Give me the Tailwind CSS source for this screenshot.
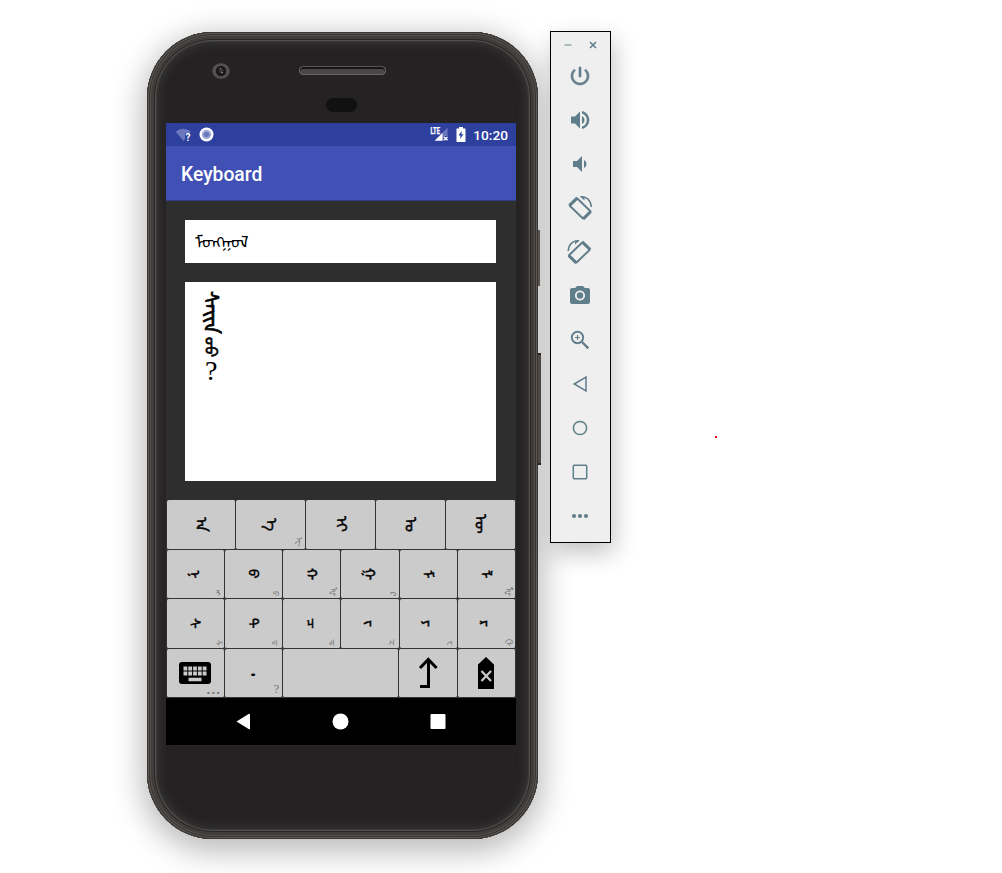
<!DOCTYPE html>
<html lang="mn">
<head>
<meta charset="utf-8">
<title>Keyboard</title>
<script src="https://cdn.jsdelivr.net/npm/@tailwindcss/browser@4"></script>
</head>
<body class="relative w-[1002px] h-[873px] overflow-hidden bg-white font-['Roboto','Noto_Sans',sans-serif]">
<div class="flex items-start pl-[147px] pt-[31px]">

  <!-- Phone -->
  <div class="relative mt-px w-[391px] h-[807px] rounded-[66px] bg-[#252223] pl-[19px] pr-[22px] shadow-[0_8px_30px_5px_rgba(0,0,0,0.27),inset_0_0_0_1px_#393633,inset_0_0_0_2px_#5f5b58,inset_0_0_0_3px_#353230,inset_0_0_0_4px_#55514e,inset_0_0_0_7px_#403d3a,inset_0_0_0_8px_#292726,inset_0_0_0_9px_#51504e,inset_0_0_0_10px_#3a3939,inset_0_0_10px_12px_#363535]">
    <div class="absolute left-[391px] top-[198px] w-[2px] h-[56px] bg-[#5b5552]"></div>
    <div class="absolute left-[391px] top-[321px] w-[3px] h-[112px] bg-[#514b48] border-y-2 border-[#292727]"></div>

    <div class="flex h-[91px] pt-[31px]">
      <svg class="ml-[46px]" width="18" height="16" viewBox="0 0 18 16"><ellipse cx="9" cy="8" rx="8.8" ry="7.8" fill="#535150"/><circle cx="9" cy="8" r="5.2" fill="#1b191a"/><circle cx="9" cy="7.5" r="2.2" fill="#383637"/><circle cx="10" cy="9.5" r=".8" fill="#aaa"/><circle cx="8.5" cy="5.5" r=".6" fill="#999"/></svg>
      <div class="ml-[69px] flex flex-col items-center">
        <div class="mt-[3px] h-[9px] w-[87px] rounded-full border border-[#686665] border-t-[#555] bg-[#494847] shadow-[inset_0_2px_0_#171516]"></div>
        <div class="mt-[23px] mr-[2px] h-[14px] w-[31px] rounded-full bg-[#111]"></div>
      </div>
    </div>

    <!-- Screen -->
    <div class="flex h-[622px] w-[350px] flex-col bg-[#2e2e2e]">
      <div class="flex h-[23px] items-center bg-[#2d409e] pl-[9px] pr-[8px] text-white">
        <svg width="17" height="14" viewBox="0 0 17 14"><path d="M.5 3.4Q7.900-1.800 16 3.400L14 5H10v6L8.500 13Z" fill="#6c78bd"/><text x="10.500" y="13" font-size="10" font-weight="700" font-family="Roboto" fill="#fff">?</text></svg>
        <svg class="ml-[7px]" width="15" height="15" viewBox="0 0 15 15"><circle cx="7.500" cy="7.500" r="7" fill="#fff"/><circle cx="7.500" cy="7.500" r="4.700" fill="#a2abd9"/><circle cx="7.500" cy="7.500" r="2.800" fill="#6c79be"/></svg>
        <svg class="ml-auto" width="19" height="15" viewBox="0 0 19 15"><path d="M17.500.8V9h-3v4.500H4.500Z" fill="#6c78bd"/><path d="M12.500 6v7.700H4.700Z" fill="#fff"/><path d="m14.200 10 3.300 3.300m0-3.300-3.300 3.300" stroke="#fff" stroke-width="1.300"/><text x=".5" y="6.800" font-size="8.500" textLength="9.500" lengthAdjust="spacingAndGlyphs" font-weight="700" font-family="Roboto" fill="#fff" stroke="#fff" stroke-width=".3">LTE</text></svg>
        <svg class="ml-[7px]" width="10" height="15" viewBox="0 0 10 15"><path d="M3 0h4v1.500h2.500V15H.5V1.500H3Z" fill="#fff"/><path d="M5.700 4 2.500 8.500h2L4 12l3.500-4.800h-2Z" fill="#2d409e"/></svg>
        <span class="ml-[7px] translate-y-px text-[13.700px] leading-[23px] font-medium">10:20</span>
      </div>
      <div class="flex h-[55px] items-center border-b border-[#303e85] bg-[#4050b5] pl-[15px] pt-[4px] text-[19.300px] font-medium text-white">Keyboard</div>
      <div class="flex h-[299px] flex-col gap-[19px] pl-[19px] pr-[20px] pt-[19px]">
        <div class="flex h-[43px] items-center bg-white pl-[10px] pt-[3px] text-[17.300px] leading-none text-black"><span>ᠮᠣᠩᠭᠣᠯ</span></div>
        <div class="flex h-[199px] flex-col items-start bg-white pl-[15px] pt-[9px] text-black">
          <span class="text-[21px] leading-[22px] [writing-mode:vertical-lr] [-webkit-text-stroke:0.7px_black]">ᠰᠠᠢᠨ</span>
          <span class="mt-[3px] text-[16px] leading-[20px] [writing-mode:vertical-lr] [-webkit-text-stroke:0.7px_black]">ᠤᠤ</span>
          <span class="ml-[5px] mt-[2px] font-['Liberation_Serif',serif] text-[28px] leading-[24px]">?</span>
        </div>
      </div>

      <!-- Keys -->
      <div id="keys" class="flex h-[198px] flex-col bg-[#333] pl-[0.500px] text-black"></div>

      <div class="flex h-[47px] items-center bg-black">
        <svg width="350" height="47" viewBox="0 0 350 47" fill="#fff"><path d="M70.500 23.500 83 15.800q1-.5 1 .7v14q0 1.200-1 .7Z"/><circle cx="174.500" cy="23.500" r="8"/><rect x="264.500" y="16" width="15" height="15" rx="1"/></svg>
      </div>
    </div>
  </div>

  <!-- Emulator toolbar -->
  <div class="relative ml-[12px] flex h-[512px] w-[61px] flex-col items-center border border-black bg-[#efefef] pr-[1px] text-[#607d8b] shadow-[3px_10px_24px_rgba(0,0,0,0.24)]">
    <svg class="shrink-0" width="58" height="22" viewBox="0 0 58 22" fill="none" stroke="currentColor"><path d="M13.500 13h7" stroke="#9eb0b8" stroke-width="1.700"/><path d="m39 10 6 6m0-6-6 6" stroke-width="1.500"/></svg>
    <div class="flex h-[44px] items-center"><svg width="24" height="24" viewBox="0 0 24 24" fill="currentColor"><path d="M13 3h-2v10h2V3zm4.830 2.170-1.420 1.420C17.990 7.860 19 9.810 19 12c0 3.870-3.130 7-7 7s-7-3.130-7-7c0-2.190 1.010-4.140 2.580-5.420L6.170 5.170C4.230 6.820 3 9.260 3 12c0 4.970 4.030 9 9 9s9-4.030 9-9c0-2.740-1.230-5.180-3.170-6.830z" stroke="currentColor" stroke-width=".6"/></svg></div>
    <div class="flex h-[44px] items-center"><svg width="24" height="24" viewBox="0 0 24 24" fill="currentColor"><path d="M3 8.500v7h4l5 5V3.500L7 8.500H3zm13.500 3.500c0-1.770-1.020-3.290-2.500-4.030v8.050c1.480-.73 2.500-2.250 2.500-4.020zM14 3v2.400c2.890.86 4.800 3.440 4.800 6.600s-1.910 5.740-4.800 6.600V21c4.200-.91 7.300-4.490 7.300-9s-3.100-8.090-7.300-9z"/></svg></div>
    <div class="flex h-[44px] items-center"><svg width="24" height="24" viewBox="0 0 24 24" fill="currentColor"><path d="M18.500 12c0-1.770-1.020-3.290-2.500-4.030v8.050c1.480-.73 2.500-2.250 2.500-4.020zM5 9v6h4l5 5V4L9 9H5z"/></svg></div>
    <div class="flex h-[44px] items-center"><svg width="26" height="26" viewBox="0 0 26 26" fill="none" stroke="currentColor"><path d="M10.300 3.500 23.500 16.200 16 23.500 2.700 10.800Z" stroke-width="1.900" stroke-linejoin="round"/><path d="m10.300 2.800-8 7.700m21.500 6-7.500 7.500" stroke-width="3"/><path d="M13.500 1.800C19.500 1 24 5.500 24.300 12" stroke-width="1.500"/><path d="m13 1.500 4.500 4V1.700Z" fill="currentColor" stroke="none"/></svg></div>
    <div class="flex h-[44px] items-center"><svg width="26" height="26" viewBox="0 0 26 26" fill="none" stroke="currentColor"><g transform="matrix(-1 0 0 1 25.500 0)"><path d="M10.300 3.500 23.500 16.200 16 23.500 2.700 10.800Z" stroke-width="1.900" stroke-linejoin="round"/><path d="m10.300 2.800-8 7.700m21.500 6-7.500 7.500" stroke-width="3"/><path d="M13.500 1.800C19.500 1 24 5.500 24.300 12" stroke-width="1.500"/><path d="m13 1.500 4.500 4V1.700Z" fill="currentColor" stroke="none"/></g></svg></div>
    <div class="flex h-[44px] items-center"><svg width="24" height="24" viewBox="0 0 24 24" fill="currentColor"><circle cx="12" cy="11.500" r="3.200"/><path d="M9 2 7.170 4H4c-1.100 0-2 .9-2 2v12c0 1.100.9 2 2 2h16c1.100 0 2-.9 2-2V6c0-1.100-.9-2-2-2h-3.170L15 2H9zm3 14.500c-2.760 0-5-2.240-5-5s2.240-5 5-5 5 2.240 5 5-2.240 5-5 5z"/></svg></div>
    <div class="flex h-[44px] items-center"><svg width="24" height="24" viewBox="0 0 24 24" fill="none" stroke="currentColor"><circle cx="9.500" cy="9.500" r="5.700" stroke-width="1.900"/><path d="m14 14 6.300 6.300" stroke-width="2.400"/><path d="M7 9.500h5M9.500 7v5" stroke-width="1.200"/></svg></div>
    <div class="flex h-[44px] items-center"><svg width="24" height="24" viewBox="0 0 24 24" fill="none" stroke="currentColor" stroke-width="1.500"><path d="M6.300 12 18 5v14Z"/></svg></div>
    <div class="flex h-[44px] items-center"><svg width="24" height="24" viewBox="0 0 24 24" fill="none" stroke="currentColor" stroke-width="1.500"><circle cx="12" cy="12" r="6.600"/></svg></div>
    <div class="flex h-[44px] items-center"><svg width="24" height="24" viewBox="0 0 24 24" fill="none" stroke="currentColor" stroke-width="1.500"><rect x="5.300" y="5.300" width="13.400" height="13.400" rx="1"/></svg></div>
    <div class="flex h-[44px] items-center"><svg width="24" height="24" viewBox="0 0 24 24" fill="currentColor"><circle cx="6" cy="12" r="2.100"/><circle cx="12" cy="12" r="2.100"/><circle cx="18" cy="12" r="2.100"/></svg></div>
  </div>
</div>
<div class="absolute left-[715px] top-[436px] size-[2px] bg-red-600"></div>
<script>
const icons = {
  keyboard: '<svg width="32" height="22" viewBox="0 0 32 22"><rect width="32" height="22" rx="3"/><path d="M4.500 6.500h23M4.500 11.500h23" stroke="#cbcbcb" stroke-width="3.800" stroke-dasharray="3.800 1"/><path d="M9.500 17.500h13" stroke="#cbcbcb" stroke-width="3.500"/></svg>',
  shift: '<svg width="20" height="32" viewBox="0 0 20 32" fill="none" stroke="#000"><path d="M2 29.500h8.500V2.500" stroke-width="3"/><path d="m2 11 8.300-8.500 8.300 8.500" stroke-width="3"/></svg>',
  del: '<svg width="16" height="32" viewBox="0 0 16 32"><path d="M0 7.500 8 0l8 7.500V32H0Z"/><path d="m3.500 14 9.500 10m0-10-9.500 10" stroke="#cbcbcb" stroke-width="2.200"/></svg>',
  dot: '<span class="text-[24px] leading-none scale-x-150 translate-y-[2px]">·</span>'
};
const rows = [
  [['ᠠ'],['ᠡ','ᠧ'],['ᠢ'],['ᠣ'],['ᠦ']],
  [['ᠨ','ᠩ'],['ᠪ','ᠫ'],['ᠬ','ᠾ'],['ᠭ','ᠺ'],['ᠮ'],['ᠯ','ᡀ']],
  [['ᠰ','ᠱ'],['ᠲ','ᠳ'],['ᠴ','ᠼ'],['ᠵ','ᠽ'],['ᠶ','ᠸ'],['ᠷ','ᠿ']],
  [['keyboard','...'],['dot','?'],['',''],['shift'],['del']]
];
document.getElementById('keys').innerHTML = rows.map((r, i) =>
  '<div class="flex flex-1">' + r.map(([k, s]) =>
    `<div class="relative flex ${i === 3 && k === '' ? 'flex-[2]' : 'flex-1'} items-center justify-center rounded-[2px] border-r border-b border-[#333] bg-[#cbcbcb]">` +
    (icons[k] || `<span class="${i === 0 ? 'text-[15.500px] mr-[2px]' : 'text-[14px]'} leading-none [writing-mode:vertical-lr] [-webkit-text-stroke:0.5px_black]">${k}</span>`) +
    (s ? `<span class="absolute right-[3px] bottom-[2px] text-[#777] ${s === '...' ? 'text-[15px] leading-[10px] tracking-[0.500px] font-bold right-[1px] bottom-[3px]' : s === '?' ? "text-[13px] leading-none font-['Liberation_Serif',serif]" : 'text-[8px] leading-none [writing-mode:vertical-lr]'}">${s}</span>` : '') +
    '</div>').join('') + '</div>').join('');
</script>
</body>
</html>
